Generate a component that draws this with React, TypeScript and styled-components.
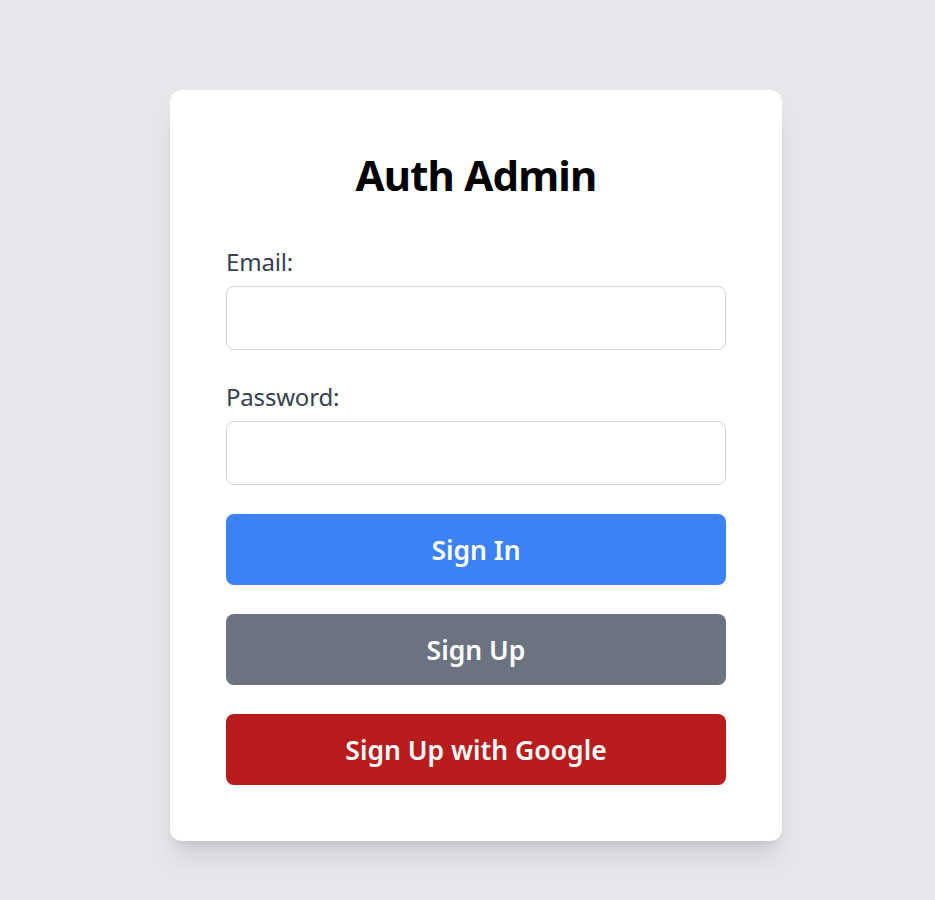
import React from "react";
import styled, { createGlobalStyle } from "styled-components";

const Global = createGlobalStyle`
  html, body { margin: 0; padding: 0; }
  body {
    background: #e5e7eb;
    font-family: "Noto Sans", "Open Sans", sans-serif;
  }
`;

const Page = styled.div`
  min-height: 900px;
  display: flex;
  justify-content: center;
  align-items: flex-start;
  padding: 90px 0 0 17px;
  box-sizing: border-box;
`;

const Card = styled.div`
  width: 612px;
  box-sizing: border-box;
  background: #ffffff;
  border-radius: 12px;
  padding: 58px 56px 56px;
  box-shadow: 0 20px 25px -5px rgba(0, 0, 0, 0.1), 0 8px 10px -6px rgba(0, 0, 0, 0.1);
  display: flex;
  flex-direction: column;
`;

const Title = styled.h1`
  margin: 0 0 41px;
  text-align: center;
  font-size: 42px;
  line-height: 54px;
  font-weight: 700;
  letter-spacing: -0.8px;
  color: #000;
`;

const Field = styled.div`
  display: flex;
  flex-direction: column;
  gap: 6px;
  margin-bottom: 28px;
`;

const Label = styled.label`
  font-size: 24px;
  line-height: 37px;
  letter-spacing: -0.2px;
  color: #374151;
`;

const Input = styled.input`
  height: 64px;
  box-sizing: border-box;
  border: 1px solid #d1d5db;
  border-radius: 8px;
  padding: 0 16px;
  font-size: 24px;
  outline: none;
`;

const Buttons = styled.div`
  display: flex;
  flex-direction: column;
  gap: 29px;
  margin-top: 1px;
`;

const Button = styled.button<{ $bg: string }>`
  height: 71px;
  border: none;
  border-radius: 8px;
  background: ${(p) => p.$bg};
  color: #fff;
  font-family: inherit;
  font-size: 26.5px;
  font-weight: 600;
  cursor: pointer;
`;

export default function App() {
  return (
    <>
      <Global />
      <Page>
        <Card>
          <Title>Auth Admin</Title>
          <Field>
            <Label>Email:</Label>
            <Input type="email" />
          </Field>
          <Field>
            <Label>Password:</Label>
            <Input type="password" />
          </Field>
          <Buttons>
            <Button $bg="#3b82f6">Sign In</Button>
            <Button $bg="#6b7280">Sign Up</Button>
            <Button $bg="#b91c1c">Sign Up with Google</Button>
          </Buttons>
        </Card>
      </Page>
    </>
  );
}
